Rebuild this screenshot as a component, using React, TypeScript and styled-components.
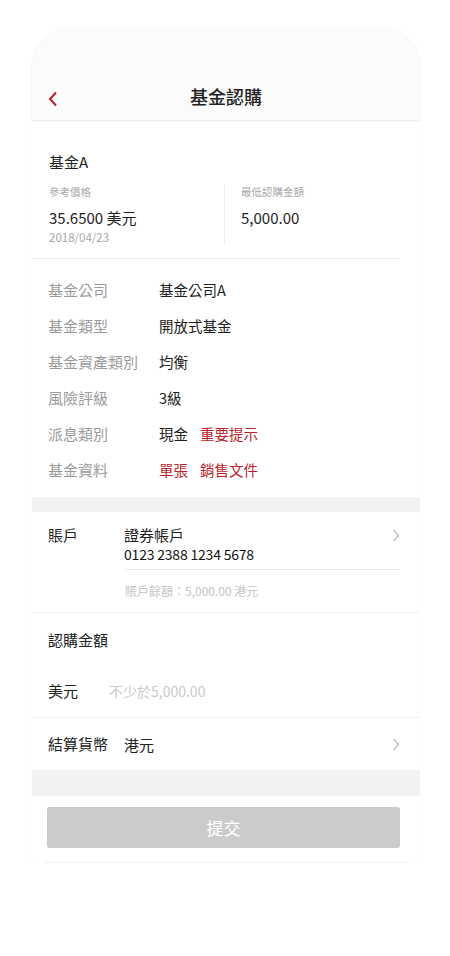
import React from "react";
import styled, { createGlobalStyle } from "styled-components";

const GlobalStyle = createGlobalStyle`
  html, body {
    margin: 0;
    padding: 0;
    background: #ffffff;
    font-family: "Noto Sans CJK TC", "Noto Sans", sans-serif;
    color: #222;
  }
  * { box-sizing: border-box; }
`;

const RED = "#bd1f2b";

const Chevron = ({ back }: { back?: boolean }) =>
  back ? (
    <svg width="10" height="16" viewBox="0 0 10 16">
      <path d="M8 1.5 L2 8 L8 14.5" fill="none" stroke={RED} strokeWidth="2" />
    </svg>
  ) : (
    <svg width="8" height="13" viewBox="0 0 8 13">
      <path d="M1.5 1 L6.5 6.5 L1.5 12" fill="none" stroke="#bdbdbd" strokeWidth="1.2" />
    </svg>
  );

function App() {
  return (
    <Page>
      <GlobalStyle />
      <Panel>
        <Header>
          <BackBtn>
            <Chevron back />
          </BackBtn>
          <Title>基金認購</Title>
        </Header>

        <FundBlock>
          <FundName>基金A</FundName>
          <Stats>
            <StatCol>
              <SmallLabel>參考價格</SmallLabel>
              <BigValue>35.6500 美元</BigValue>
              <DateText>2018/04/23</DateText>
            </StatCol>
            <StatCol divided>
              <SmallLabel>最低認購金額</SmallLabel>
              <BigValue>5,000.00</BigValue>
            </StatCol>
          </Stats>
        </FundBlock>

        <InfoList>
          <InfoRow>
            <InfoLabel>基金公司</InfoLabel>
            <InfoValue>基金公司A</InfoValue>
          </InfoRow>
          <InfoRow>
            <InfoLabel>基金類型</InfoLabel>
            <InfoValue>開放式基金</InfoValue>
          </InfoRow>
          <InfoRow>
            <InfoLabel>基金資產類別</InfoLabel>
            <InfoValue>均衡</InfoValue>
          </InfoRow>
          <InfoRow>
            <InfoLabel>風險評級</InfoLabel>
            <InfoValue>3級</InfoValue>
          </InfoRow>
          <InfoRow>
            <InfoLabel>派息類別</InfoLabel>
            <InfoValue>
              現金<Link>重要提示</Link>
            </InfoValue>
          </InfoRow>
          <InfoRow>
            <InfoLabel>基金資料</InfoLabel>
            <InfoValue>
              <Link first>單張</Link>
              <Link>銷售文件</Link>
            </InfoValue>
          </InfoRow>
        </InfoList>

        <Band height={15} />

        <AccountBlock>
          <AccountTop>
            <RowLabel>賬戶</RowLabel>
            <AccountText>
              <div>證券帳戶</div>
              <AccountNo>0123 2388 1234 5678</AccountNo>
            </AccountText>
            <ArrowCell>
              <Chevron />
            </ArrowCell>
          </AccountTop>
          <Balance>賬戶餘額：5,000.00 港元</Balance>
        </AccountBlock>

        <AmountBlock>
          <RowLabel>認購金額</RowLabel>
          <AmountInput>
            <RowLabel>美元</RowLabel>
            <Placeholder>不少於5,000.00</Placeholder>
          </AmountInput>
        </AmountBlock>

        <SettleRow>
          <RowLabel>結算貨幣</RowLabel>
          <SettleValue>港元</SettleValue>
          <ArrowCell>
            <Chevron />
          </ArrowCell>
        </SettleRow>

        <Band height={26} />

        <Footer>
          <SubmitButton disabled>提交</SubmitButton>
        </Footer>
      </Panel>
    </Page>
  );
}

const Page = styled.div`
  width: 450px;
  min-height: 956px;
  padding-top: 27px;
  background: #fff;
`;

const Panel = styled.div`
  width: 388px;
  margin-left: 32px;
  background: #fff;
  border-radius: 38px 38px 0 0;
  box-shadow: 0 0 1px rgba(0, 0, 0, 0.05);
`;

const Header = styled.div`
  height: 93px;
  border-radius: 38px 38px 0 0;
  background: #fcfbfb;
  box-shadow: 0 1px 2px rgba(0, 0, 0, 0.1);
  display: flex;
  align-items: flex-end;
  justify-content: center;
  position: relative;
  padding-bottom: 9px;
`;

const BackBtn = styled.div`
  position: absolute;
  left: 16px;
  bottom: 13px;
  display: flex;
`;

const Title = styled.div`
  font-size: 18px;
  line-height: 30px;
  font-weight: 500;
  color: #222;
`;

const FundBlock = styled.div`
  padding: 32px 0 14px 16px;
  margin-right: 20px;
  border-bottom: 1px solid #ececec;
`;

const FundName = styled.div`
  font-size: 15px;
  line-height: 20px;
  padding-left: 1px;
`;

const Stats = styled.div`
  display: flex;
  margin-top: 13px;
`;

const StatCol = styled.div<{ divided?: boolean }>`
  width: ${(p) => (p.divided ? "auto" : "176px")};
  flex: ${(p) => (p.divided ? 1 : "none")};
  padding-left: ${(p) => (p.divided ? "16px" : "1px")};
  border-left: ${(p) => (p.divided ? "1px solid #ececec" : "none")};
`;

const SmallLabel = styled.div`
  font-size: 10.5px;
  line-height: 14px;
  color: #a8a8a8;
`;

const BigValue = styled.div`
  font-size: 15px;
  line-height: 20px;
  margin-top: 9px;
  color: #222;
`;

const DateText = styled.div`
  font-size: 11.5px;
  line-height: 14px;
  margin-top: 2px;
  color: #a8a8a8;
`;

const InfoList = styled.div`
  padding: 12px 0 10px 16px;
`;

const InfoRow = styled.div`
  display: flex;
  align-items: center;
  height: 36px;
`;

const InfoLabel = styled.div`
  width: 111px;
  font-size: 15px;
  color: #9a9a9a;
`;

const InfoValue = styled.div`
  font-size: 14.5px;
  color: #1e1e1e;
`;

const Link = styled.span<{ first?: boolean }>`
  color: ${RED};
  margin-left: ${(p) => (p.first ? "0" : "12px")};
`;

const Band = styled.div<{ height: number }>`
  height: ${(p) => p.height}px;
  background: #f2f2f2;
`;

const AccountBlock = styled.div`
  padding: 13px 0 0 16px;
  border-bottom: 1px solid #f0f0f0;
`;

const AccountTop = styled.div`
  display: flex;
  align-items: flex-start;
  padding-right: 20px;
  padding-bottom: 6px;
`;

const RowLabel = styled.div`
  width: 76px;
  font-size: 15px;
  line-height: 20px;
  color: #222;
`;

const AccountText = styled.div`
  flex: 1;
  font-size: 15px;
  line-height: 20px;
  color: #222;
`;

const AccountNo = styled.div`
  font-size: 14px;
  line-height: 18px;
  letter-spacing: -0.2px;
  color: #111;
`;

const ArrowCell = styled.div`
  display: flex;
  padding-top: 4px;
`;

const Balance = styled.div`
  margin-left: 77px;
  margin-right: 20px;
  border-top: 1px solid #ececec;
  padding: 13px 0 13px 0;
  font-size: 12px;
  line-height: 16px;
  color: #c6c6c6;
`;

const AmountBlock = styled.div`
  padding: 17px 0 16px 16px;
  border-bottom: 1px solid #f0f0f0;
`;

const AmountInput = styled.div`
  display: flex;
  align-items: center;
  margin-top: 31px;

  & > ${RowLabel} {
    width: 61px;
  }
`;

const Placeholder = styled.div`
  font-size: 14px;
  color: #cacaca;
`;

const SettleRow = styled.div`
  display: flex;
  align-items: center;
  height: 52px;
  padding: 0 20px 0 16px;

  & > ${ArrowCell} {
    padding-top: 0;
  }
`;

const SettleValue = styled.div`
  flex: 1;
  font-size: 15px;
  color: #222;
`;

const Footer = styled.div`
  padding: 11px 10px 14px 4px;
  margin: 0 10px 0 11px;
  border-bottom: 1px solid #f2f2f2;
`;

const SubmitButton = styled.button`
  display: block;
  width: 100%;
  height: 41px;
  border: none;
  border-radius: 3px;
  background: #cbcbcb;
  color: #fff;
  font-family: "Noto Sans CJK TC", sans-serif;
  font-size: 17px;
  cursor: default;
`;

export default App;
